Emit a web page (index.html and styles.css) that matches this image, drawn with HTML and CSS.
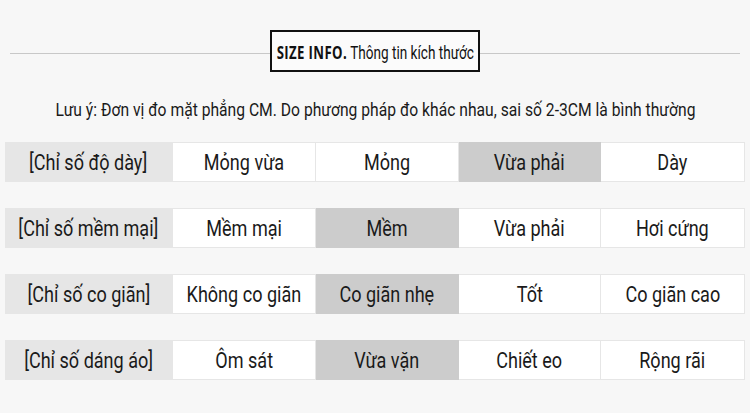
FILE: index.html
```html
<!DOCTYPE html>
<html lang="vi">
<head>
<meta charset="utf-8">
<link rel="stylesheet" href="styles.css">
</head>
<body>
<div class="page">
  <div class="header">
    <div class="rule"></div>
    <div class="title"><span class="squeeze"><b>SIZE INFO.</b> Thông tin kích thước</span></div>
    <div class="rule"></div>
  </div>
  <p class="note"><span class="squeeze">Lưu ý: Đơn vị đo mặt phẳng CM. Do phương pháp đo khác nhau, sai số 2-3CM là bình thường</span></p>
  <div class="rows">
    <div class="row">
      <div class="cell label"><span class="squeeze">[Chỉ số độ dày]</span></div>
      <div class="cell"><span class="squeeze">Mỏng vừa</span></div>
      <div class="cell"><span class="squeeze">Mỏng</span></div>
      <div class="cell on"><span class="squeeze">Vừa phải</span></div>
      <div class="cell"><span class="squeeze">Dày</span></div>
    </div>
    <div class="row">
      <div class="cell label"><span class="squeeze">[Chỉ số mềm mại]</span></div>
      <div class="cell"><span class="squeeze">Mềm mại</span></div>
      <div class="cell on"><span class="squeeze">Mềm</span></div>
      <div class="cell"><span class="squeeze">Vừa phải</span></div>
      <div class="cell"><span class="squeeze">Hơi cứng</span></div>
    </div>
    <div class="row">
      <div class="cell label"><span class="squeeze">[Chỉ số co giãn]</span></div>
      <div class="cell"><span class="squeeze">Không co giãn</span></div>
      <div class="cell on"><span class="squeeze">Co giãn nhẹ</span></div>
      <div class="cell"><span class="squeeze">Tốt</span></div>
      <div class="cell"><span class="squeeze">Co giãn cao</span></div>
    </div>
    <div class="row">
      <div class="cell label"><span class="squeeze">[Chỉ số dáng áo]</span></div>
      <div class="cell"><span class="squeeze">Ôm sát</span></div>
      <div class="cell on"><span class="squeeze">Vừa vặn</span></div>
      <div class="cell"><span class="squeeze">Chiết eo</span></div>
      <div class="cell"><span class="squeeze">Rộng rãi</span></div>
    </div>
  </div>
</div>
</body>
</html>
```

FILE: styles.css
```css
html, body {
  margin: 0;
  padding: 0;
  background: #f7f7f7;
}
.page {
  width: 750px;
  height: 413px;
  font-family: "Roboto", "Liberation Sans", sans-serif;
  color: #1a1a1a;
  padding-top: 30px;
  box-sizing: border-box;
  overflow: hidden;
}
.squeeze {
  display: inline-block;
  white-space: nowrap;
  transform-origin: center;
}
.header {
  display: flex;
  align-items: center;
  padding: 0 10px;
  height: 42px;
}
.rule {
  flex: 1;
  height: 1px;
  background: #c8c8c8;
  margin-top: 4px;
}
.title {
  width: 210px;
  height: 42px;
  box-sizing: border-box;
  border: 2px solid #111;
  display: flex;
  align-items: center;
  justify-content: center;
  font-size: 17.5px;
  color: #111;
  background: #fbfbfb;
  padding-top: 2px;
}
.title .squeeze {
  transform: scaleX(0.775);
}
.title b {
  font-family: "Open Sans", "Liberation Sans", sans-serif;
  font-weight: 700;
  font-size: 17px;
  letter-spacing: 0.5px;
}
.note {
  margin: 27px 0 0;
  text-align: center;
  font-size: 17.5px;
  line-height: 22px;
}
.note .squeeze {
  transform: scaleX(0.895);
}
.rows {
  margin-top: 21px;
  padding-left: 5px;
  display: flex;
  flex-direction: column;
  gap: 26px;
}
.row {
  display: grid;
  grid-template-columns: 168px 143px 143px 142px 144px;
  height: 40px;
}
.cell {
  display: flex;
  align-items: center;
  justify-content: center;
  font-size: 22px;
  background: #fff;
  border: 1px solid #e6e6e6;
  border-left: none;
  box-sizing: border-box;
}
.cell .squeeze {
  transform: scaleX(0.82);
}
.cell.label {
  background: #e6e6e6;
  border-color: #e6e6e6;
}
.cell.on {
  background: #cccccc;
  border-color: #cccccc;
}
```
